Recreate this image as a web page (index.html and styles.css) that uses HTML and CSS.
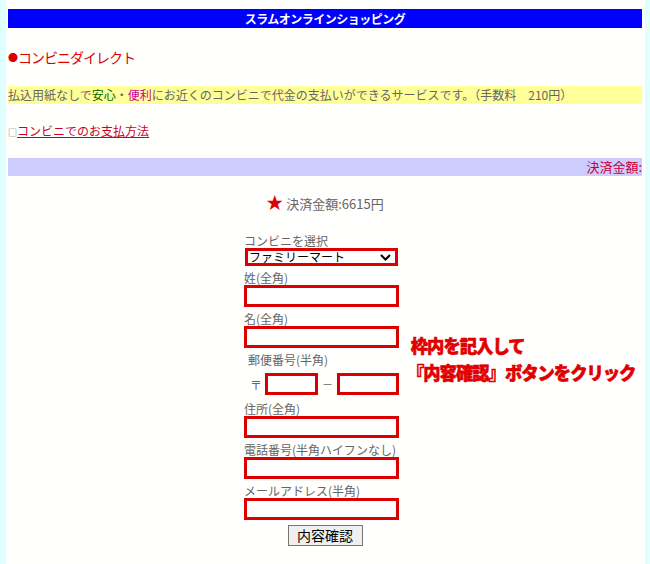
FILE: index.html
```html
<!DOCTYPE html>
<html lang="ja">
<head>
  <meta charset="UTF-8">
  <title>コンビニダイレクト</title>
  <link rel="stylesheet" href="styles.css">
</head>
<body>
  <div class="page">
    <div class="title">スラムオンラインショッピング</div>

    <h2 class="heading"><span class="dot">●</span>コンビニダイレクト</h2>

    <p class="intro">払込用紙なしで<span class="safe">安心</span>・<span class="easy">便利</span>にお近くのコンビニで代金の支払いができるサービスです。（手数料　210円）</p>

    <p class="method"><span class="box">□</span><a href="#">コンビニでのお支払方法</a></p>

    <div class="total-bar">決済金額:</div>

    <p class="amount"><span class="star">★</span> 決済金額:6615円</p>

    <div class="order">
      <form class="order-form">
        <label for="store">コンビニを選択</label>
        <div class="select-wrap">
          <select id="store" class="store-select">
            <option>ファミリーマート</option>
            <option>ローソン</option>
            <option>セイコーマート</option>
          </select>
          <svg class="chevron" width="11" height="7" viewBox="0 0 11 7">
            <path d="M1 1 L5.5 5.5 L10 1" fill="none" stroke="#000" stroke-width="2"/>
          </svg>
        </div>

        <label for="sei">姓(全角)</label>
        <input type="text" id="sei">

        <label for="mei">名(全角)</label>
        <input type="text" id="mei">

        <label for="zip1" class="zip-label">郵便番号(半角)</label>
        <div class="zip-row">
          <span class="zip-mark">〒</span>
          <input type="text" id="zip1" class="zip1">
          <span class="dash">－</span>
          <input type="text" id="zip2" class="zip2">
        </div>

        <label for="addr">住所(全角)</label>
        <input type="text" id="addr">

        <label for="tel">電話番号(半角ハイフンなし)</label>
        <input type="text" id="tel">

        <label for="mail">メールアドレス(半角)</label>
        <input type="text" id="mail">

        <button type="button" class="confirm">内容確認</button>
      </form>

      <div class="note">
        <div>枠内を記入して</div>
        <div class="note-second">『内容確認』ボタンをクリック</div>
      </div>
    </div>
  </div>
</body>
</html>
```

FILE: styles.css
```css
/* General */
body {
  margin: 0;
  background-color: #e0ffff;
  font-family: "Noto Sans CJK JP", "DejaVu Sans", sans-serif;
  font-size: 12px;
  color: #666;
}

.page {
  min-height: 564px;
  margin: 0 5px 0 6px;
  padding: 9px 3px 0 2px;
  background-color: #fffffd;
  box-sizing: border-box;
}

/* Header bar */
.title {
  height: 19px;
  line-height: 19px;
  background-color: #0000ff;
  color: #fff;
  font-weight: bold;
  text-align: center;
  letter-spacing: -0.5px;
}

.heading {
  margin: 20px 0 0;
  height: 18px;
  line-height: 18px;
  font-size: 14px;
  font-weight: normal;
  color: #dd0000;
  letter-spacing: -1px;
}

.heading .dot {
  font-size: 10px;
  letter-spacing: 0;
  vertical-align: 1px;
}

.intro {
  margin: 20px 0 0;
  height: 18px;
  line-height: 18px;
  background-color: #ffff99;
  white-space: nowrap;
}

.intro .safe {
  color: #006600;
}

.intro .easy {
  color: #cc0099;
}

.method {
  margin: 18px 0 0;
  height: 18px;
  line-height: 18px;
}

.method .box {
  font-size: 9px;
  line-height: 1;
  color: #666;
}

.method a {
  color: #cc0022;
}

.total-bar {
  margin-top: 18px;
  height: 18px;
  line-height: 18px;
  background-color: #ccccff;
  color: #cc0033;
  font-size: 13px;
  text-align: right;
  white-space: nowrap;
  overflow: hidden;
}

.amount {
  margin: 17px 0 0;
  height: 18px;
  line-height: 18px;
  font-size: 13px;
  text-align: center;
}

.amount .star {
  color: #dd0000;
  font-size: 17px;
  line-height: 1;
}

/* Order form */
.order {
  display: grid;
  grid-template-columns: minmax(0, 1fr) 162px minmax(0, 1fr);
  margin-top: 23px;
}

.order-form {
  grid-column: 2;
  display: flex;
  flex-direction: column;
  align-items: flex-start;
}

.order-form label {
  line-height: 14px;
  margin-top: 5px;
}

.order-form label:first-child {
  margin-top: 0;
}

.order-form input {
  width: 155px;
  height: 22px;
  margin: 0;
  padding: 0 2px;
  border: 3px solid #dd0000;
  box-sizing: border-box;
  background: #fff;
}

.select-wrap {
  position: relative;
  margin-left: 1px;
}

.store-select {
  -webkit-appearance: none;
  appearance: none;
  display: block;
  width: 153px;
  height: 18px;
  margin: 0;
  padding: 0 0 0 1px;
  border: 3px solid #dd0000;
  border-radius: 0;
  box-sizing: border-box;
  font-family: "Noto Sans CJK JP", sans-serif;
  font-size: 12px;
  line-height: 12px;
  color: #000;
  background: #fff;
}

.chevron {
  position: absolute;
  top: 6px;
  right: 7px;
  pointer-events: none;
}

.zip-label {
  padding-left: 4px;
}

.zip-row {
  display: flex;
  align-items: center;
  margin: 6px 0 2px;
  padding-left: 6px;
}

.zip-row .zip-mark {
  margin-right: 3px;
}

.order-form .zip1 {
  width: 53px;
}

.zip-row .dash {
  margin: 0 4px;
  font-size: 11px;
  line-height: 11px;
}

.order-form .zip2 {
  width: 62px;
}

.confirm {
  align-self: center;
  width: 75px;
  height: 21px;
  margin-top: 5px;
  padding: 0;
  background-color: #efefef;
  border: 1px solid #767676;
  border-radius: 0;
  font-family: "Noto Sans CJK JP", sans-serif;
  font-size: 14px;
  line-height: 17px;
  color: #000;
}

/* Instruction note */
.note {
  grid-column: 3;
  align-self: start;
  margin-top: 98px;
  padding-left: 5px;
  color: #e00000;
  font-size: 18px;
  font-weight: 900;
  line-height: 27px;
  letter-spacing: -1px;
  -webkit-text-stroke: 0.6px #e00000;
  white-space: nowrap;
  transform: scaleX(0.96);
  transform-origin: top left;
}

.note-second {
  margin-left: -4px;
}
```
